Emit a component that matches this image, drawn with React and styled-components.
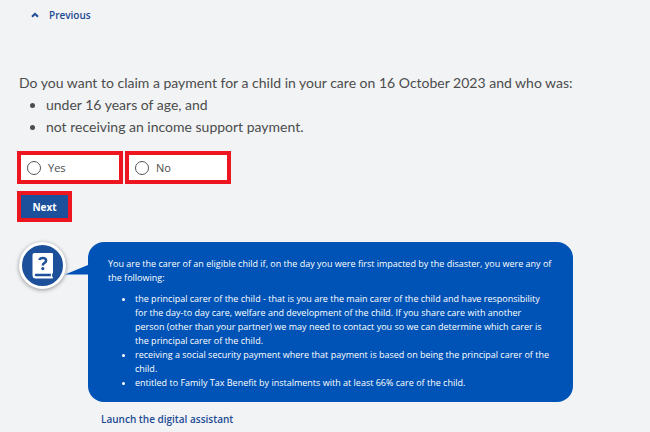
import React, { useState } from 'react';
import styled, { createGlobalStyle } from 'styled-components';

function App() {
  const [answer, setAnswer] = useState('');

  const onChange = (e) => {
    setAnswer(e.target.value);
  };

  return (
    <>
      <GlobalStyle />
      <StyledPage>
        <StyledPrevious type="button">
          <svg width="8" height="6" viewBox="0 0 8 6" aria-hidden="true">
            <path d="M1 4.8 4 1.8 7 4.8" fill="none" stroke="currentColor" strokeWidth="2" />
          </svg>
          Previous
        </StyledPrevious>

        <StyledForm onSubmit={(e) => e.preventDefault()}>
          <StyledQuestion id="question">
            <p>Do you want to claim a payment for a child in your care on 16 October 2023 and who was:</p>
            <ul>
              <li>under 16 years of age, and</li>
              <li>not receiving an income support payment.</li>
            </ul>
          </StyledQuestion>

          <StyledOptions role="radiogroup" aria-labelledby="question">
            {['Yes', 'No'].map((option) => (
              <StyledOption key={option}>
                <input
                  type="radio"
                  name="answer"
                  value={option}
                  checked={answer === option}
                  onChange={onChange}
                />
                {option}
              </StyledOption>
            ))}
          </StyledOptions>

          <StyledNext type="submit">Next</StyledNext>
        </StyledForm>

        <StyledHelp>
          <StyledAvatar>
            <BookIcon />
          </StyledAvatar>
          <StyledBubble>
            <StyledTail width="24" height="10" viewBox="0 0 24 10" aria-hidden="true">
              <path d="M0 9.5 23 0h1v9.5z" fill="#0053b6" />
            </StyledTail>
            <p>
              You are the carer of an eligible child if, on the day you were first impacted by the
              disaster, you were any of the following:
            </p>
            <ul>
              <li>
                the principal carer of the child - that is you are the main carer of the child and
                have responsibility for the day-to day care, welfare and development of the child.
                If you share care with another person (other than your partner) we may need to
                contact you so we can determine which carer is the principal carer of the child.
              </li>
              <li>
                receiving a social security payment where that payment is based on being the
                principal carer of the child.
              </li>
              <li>entitled to Family Tax Benefit by instalments with at least 66% care of the child.</li>
            </ul>
          </StyledBubble>
        </StyledHelp>

        <StyledLaunch href="#assistant">Launch the digital assistant</StyledLaunch>
      </StyledPage>
    </>
  );
}

function BookIcon() {
  return (
    <svg width="22" height="26" viewBox="0 0 22 26" aria-hidden="true">
      <path
        d="M2.500 0H20q1 0 1 1v18.500q0 .8-.7 1-.5 2 0 3.200.7.200.7 1T20 25.500H4Q.5 25.500.5 22V2Q.5 0 2.500 0z"
        fill="#fff"
      />
      <path d="M4 20.700h15q-.5 1.300 0 2.600H4a1.300 1.300 0 0 1 0-2.600z" fill="#1c509a" />
      <path
        d="M7.400 7Q8 4.900 10.800 4.900q3.300 0 3.300 2.600 0 1.500-1.800 2.500-1.500.9-1.500 2.500"
        fill="none"
        stroke="#1c509a"
        strokeWidth="2.500"
      />
      <circle cx="10.800" cy="15.600" r="1.600" fill="#1c509a" />
    </svg>
  );
}

export default App;

const GlobalStyle = createGlobalStyle`
  * {
    box-sizing: border-box;
  }
  body {
    margin: 0;
    background-color: #f1f3f5;
    color: #4c4c4c;
    font-family: 'Open Sans', 'Noto Sans', sans-serif;
  }
  p, ul {
    margin: 0;
  }
  button, input {
    font-family: inherit;
  }
`;

const StyledPage = styled.main`
  display: flex;
  flex-direction: column;
  align-items: flex-start;
  padding: 8px 17px 4px;
`;

const StyledPrevious = styled.button`
  display: flex;
  align-items: center;
  gap: 10px;
  margin-left: 14px;
  padding: 0;
  border: 0;
  background: none;
  color: #1d4a94;
  font-size: 10px;
  font-weight: 600;
  line-height: 14px;
  cursor: pointer;
`;

const StyledForm = styled.form`
  width: 100%;
  margin-top: 50px;
`;

const StyledQuestion = styled.div`
  padding-left: 2px;
  font-family: Lato, 'Open Sans', sans-serif;
  font-size: 14px;
  line-height: 22px;
  ul {
    padding-left: 27px;
  }
`;

const StyledOptions = styled.div`
  display: flex;
  gap: 2px;
  margin-top: 13px;
`;

const StyledOption = styled.label`
  display: flex;
  align-items: center;
  gap: 7px;
  width: 106px;
  height: 33px;
  padding: 0 6px;
  border: 4px solid #ed1520;
  background-color: #fff;
  font-size: 11px;
  input {
    appearance: none;
    width: 14px;
    height: 14px;
    margin: 0;
    border: 1px solid #555;
    border-radius: 50%;
    background-color: #fff;
  }
  input:checked {
    border: 4px solid #1c509a;
  }
`;

const StyledNext = styled.button`
  display: block;
  width: 55px;
  height: 31px;
  margin-top: 7px;
  padding: 0;
  border: 4px solid #ed1520;
  background-color: #1c509a;
  color: #fff;
  font-size: 10px;
  font-weight: 700;
  cursor: pointer;
`;

const StyledHelp = styled.section`
  display: flex;
  align-items: flex-start;
  gap: 22px;
  margin-top: 20px;
  padding-left: 2px;
`;

const StyledAvatar = styled.div`
  display: flex;
  flex-shrink: 0;
  align-items: center;
  justify-content: center;
  width: 47px;
  height: 47px;
  border: 3px solid #fff;
  border-radius: 50%;
  background-color: #1c509a;
  box-shadow: 0 1px 4px rgba(0, 0, 0, 0.4);
`;

const StyledBubble = styled.div`
  position: relative;
  max-width: 485px;
  padding: 15px 20px 12px;
  border-radius: 16px;
  background-color: #0053b6;
  color: #fff;
  font-size: 9px;
  line-height: 14px;
  ul {
    margin-top: 7px;
    padding: 0 2px 0 27px;
  }
`;

const StyledTail = styled.svg`
  position: absolute;
  top: 23px;
  left: -23px;
`;

const StyledLaunch = styled.a`
  margin: 10px 0 0 84px;
  color: #1d4a94;
  font-size: 10px;
  font-weight: 600;
  line-height: 14px;
  text-decoration: none;
`;
